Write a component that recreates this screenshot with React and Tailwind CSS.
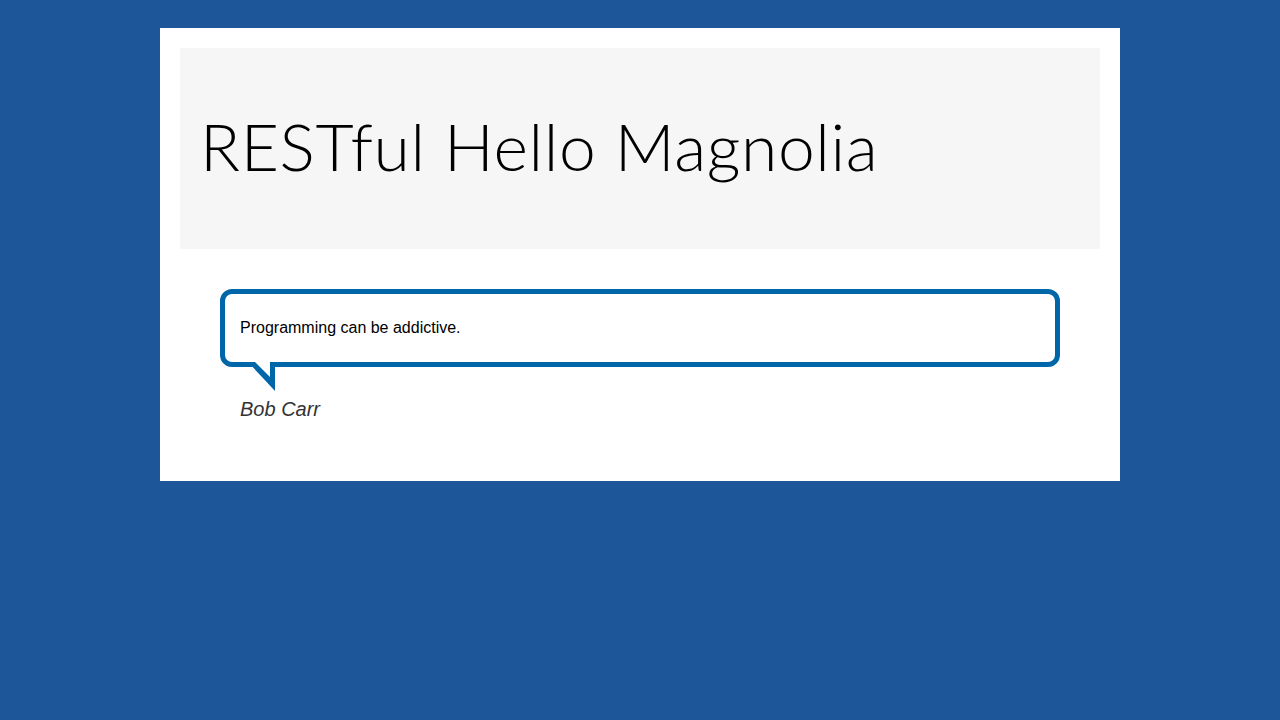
import React from "react";

export default function App() {
  return (
    <div className="min-h-[720px] w-full bg-[#1e5799] pt-[28px]" style={{ fontFamily: '"Liberation Sans", Arial, sans-serif' }}>
      <div className="mx-auto w-[960px] bg-white p-[20px]">
        <header className="flex h-[201px] items-center bg-[#f6f6f6] px-[20px]">
          <h1 className="mb-[6px] text-[66px] font-light leading-none tracking-[0.6px] text-black" style={{ fontFamily: 'Lato, "Open Sans", sans-serif' }}>
            RESTful Hello Magnolia
          </h1>
        </header>
        <section className="px-[40px] pt-[40px] pb-[40px]">
          <div className="relative">
            <div className="rounded-[12px] border-[5px] border-[#0066aa] px-[15px] py-[24px] text-[16px] leading-[20px] text-black">
              Programming can be addictive.
            </div>
            <svg className="absolute left-[28px] top-[73px]" width="27" height="29" viewBox="0 0 27 29">
              <polygon points="0,0 27,29 27,0" fill="#0066aa" />
              <polygon points="7,0 22,15 22,0" fill="#ffffff" />
            </svg>
          </div>
          <p className="mt-[31px] pl-[20px] text-[20px] italic leading-[23px] text-[#333333]">Bob Carr</p>
        </section>
      </div>
    </div>
  );
}
